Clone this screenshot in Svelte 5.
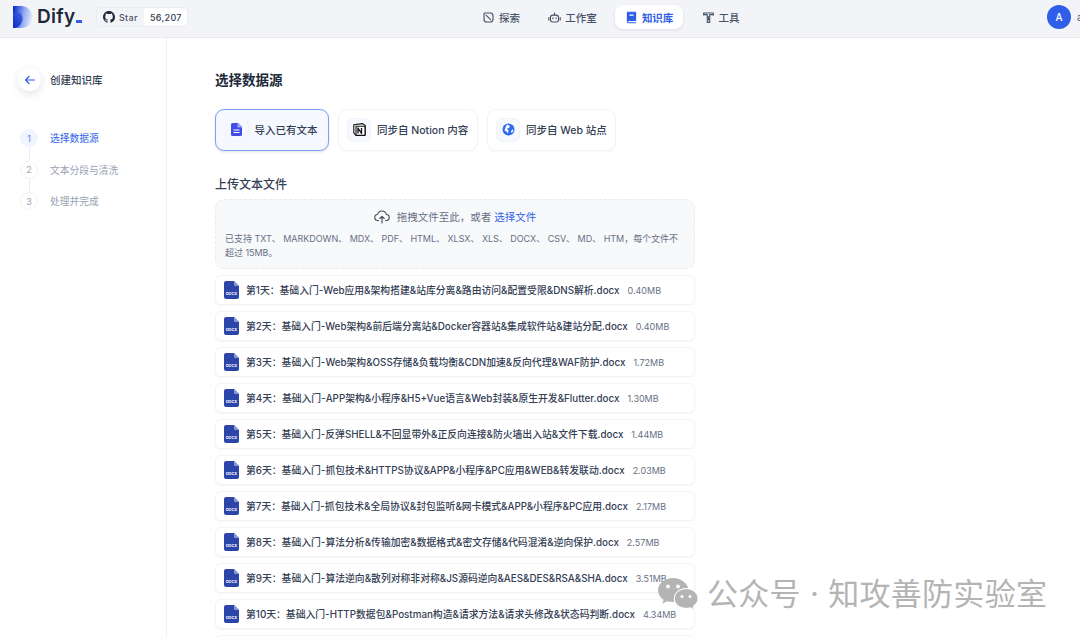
<script>
  const nav = [
    { label: '探索', icon: 'explore' },
    { label: '工作室', icon: 'robot' },
    { label: '知识库', icon: 'book', active: true },
    { label: '工具', icon: 'tool' }
  ];

  const steps = ['选择数据源', '文本分段与清洗', '处理并完成'];

  const files = [
    { name: '第1天：基础入门-Web应用&架构搭建&站库分离&路由访问&配置受限&DNS解析.docx', size: '0.40MB' },
    { name: '第2天：基础入门-Web架构&前后端分离站&Docker容器站&集成软件站&建站分配.docx', size: '0.40MB' },
    { name: '第3天：基础入门-Web架构&OSS存储&负载均衡&CDN加速&反向代理&WAF防护.docx', size: '1.72MB' },
    { name: '第4天：基础入门-APP架构&小程序&H5+Vue语言&Web封装&原生开发&Flutter.docx', size: '1.30MB' },
    { name: '第5天：基础入门-反弹SHELL&不回显带外&正反向连接&防火墙出入站&文件下载.docx', size: '1.44MB' },
    { name: '第6天：基础入门-抓包技术&HTTPS协议&APP&小程序&PC应用&WEB&转发联动.docx', size: '2.03MB' },
    { name: '第7天：基础入门-抓包技术&全局协议&封包监听&网卡模式&APP&小程序&PC应用.docx', size: '2.17MB' },
    { name: '第8天：基础入门-算法分析&传输加密&数据格式&密文存储&代码混淆&逆向保护.docx', size: '2.57MB' },
    { name: '第9天：基础入门-算法逆向&散列对称非对称&JS源码逆向&AES&DES&RSA&SHA.docx', size: '3.51MB' },
    { name: '第10天：基础入门-HTTP数据包&Postman构造&请求方法&请求头修改&状态码判断.docx', size: '4.34MB' }
  ];
</script>

<div class="page">
  <header class="topbar">
    <div class="brand">
      <svg class="logo" width="19" height="22" viewBox="0 0 19 22">
        <defs>
          <linearGradient id="lg" x1="0" y1="0.3" x2="1" y2="0.5">
            <stop offset="0" stop-color="#0b2fd0" />
            <stop offset="0.55" stop-color="#8fa8f2" />
            <stop offset="1" stop-color="#e3e9fb" />
          </linearGradient>
          <linearGradient id="lg2" x1="0" y1="1" x2="1" y2="0">
            <stop offset="0" stop-color="#0a2bc4" />
            <stop offset="1" stop-color="#3f63e6" />
          </linearGradient>
        </defs>
        <path d="M0 0H8C14.500 0 19 4.600 19 11S14.500 22 8 22H0Z" fill="url(#lg)" />
        <path d="M0 7H6C8 7 9.500 9 9.500 12.500S7 22 0 22Z" fill="url(#lg2)" />
      </svg>
      <span class="wordmark">Dify<i></i></span>
      <div class="star">
        <span class="star-left">
          <svg width="12" height="12" viewBox="0 0 16 16" fill="#1f2a37"><path d="M8 0C3.580 0 0 3.580 0 8c0 3.540 2.290 6.530 5.470 7.590.4.070.55-.17.55-.38 0-.19-.01-.82-.01-1.490-2.010.37-2.530-.49-2.690-.94-.09-.23-.48-.94-.82-1.130-.28-.15-.68-.52-.01-.53.63-.01 1.080.58 1.230.82.72 1.210 1.870.87 2.330.66.07-.52.28-.87.51-1.070-1.780-.2-3.640-.89-3.640-3.950 0-.87.31-1.590.82-2.150-.08-.2-.36-1.020.08-2.120 0 0 .67-.21 2.200.82.64-.18 1.320-.27 2-.27s1.360.09 2 .27c1.530-1.040 2.200-.82 2.200-.82.44 1.100.16 1.920.08 2.120.51.56.82 1.270.82 2.150 0 3.070-1.870 3.750-3.650 3.950.29.25.54.73.54 1.480 0 1.070-.01 1.930-.01 2.200 0 .21.15.46.55.38A8.010 8.010 0 0 0 16 8c0-4.420-3.580-8-8-8Z" /></svg>
          Star
        </span>
        <span class="star-count">56,207</span>
      </div>
    </div>

    <nav class="nav">
      {#each nav as item}
        <div class="nav-item" class:active={item.active}>
          <svg width="13" height="13" viewBox="0 0 16 16" fill="none" stroke="currentColor" stroke-width="1.400" stroke-linejoin="round" stroke-linecap="round">
            {#if item.icon === 'explore'}
              <path d="M3 2.500h7.500a3.500 3.500 0 0 1 3 3.500v4a3.500 3.500 0 0 1-3.500 3.500H6A3.500 3.500 0 0 1 2.500 10V3Z" />
              <path d="M5 5l5.500 5.500" />
            {:else if item.icon === 'robot'}
              <rect x="3" y="5" width="10" height="8.500" rx="3" />
              <path d="M8 5V2.500M1 8v3M15 8v3M6 8.500v1M10 8.500v1" />
            {:else if item.icon === 'book'}
              <path d="M3 1.500h10v10H5a2 2 0 0 0-2 1.500Z" fill="currentColor" />
              <path d="M3 13a1.500 1.500 0 0 0 1.500 1.500H13" />
              <path d="M6 5h4" stroke="#fff" />
            {:else}
              <path d="M2 2.500h12v2.500l-1.500-.5h-3V14H6.500V4.500h-3L2 5Z" />
              <path d="M8 7v4" />
            {/if}
          </svg>
          {item.label}
        </div>
      {/each}
    </nav>

    <div class="account">
      <span class="avatar">A</span>
      <span class="account-name">a</span>
    </div>
  </header>

  <div class="body">
    <aside class="sidebar">
      <div class="side-head">
        <span class="back">
          <svg width="12" height="12" viewBox="0 0 12 12" fill="none" stroke="#2f5fe8" stroke-width="1.200" stroke-linecap="round" stroke-linejoin="round"><path d="M10.500 6h-9M5 2.500L1.500 6 5 9.500" /></svg>
        </span>
        <span>创建知识库</span>
      </div>
      <ol class="steps">
        {#each steps as step, i}
          <li class="step" class:current={i === 0}>
            <span class="step-num">{i + 1}</span>
            <span>{step}</span>
          </li>
        {/each}
      </ol>
    </aside>

    <main class="content">
      <h1>选择数据源</h1>

      <div class="sources">
        <div class="source selected">
          <span class="source-icon">
            <svg width="11" height="13" viewBox="0 0 11 13"><path d="M1.500 0H7l4 4v7.500A1.500 1.500 0 0 1 9.500 13h-8A1.500 1.500 0 0 1 0 11.500v-10A1.500 1.500 0 0 1 1.500 0Z" fill="#444ce7" /><path d="M2.500 7h6M2.500 9.500h6" stroke="#fff" stroke-width="1.200" /><path d="M6.500 0v4.500H11" fill="#fff" opacity=".5" /></svg>
          </span>
          导入已有文本
        </div>
        <div class="source notion">
          <span class="source-icon">
            <svg width="13" height="13" viewBox="0 0 13 13" fill="#fff" stroke="#111" stroke-width="1.100" stroke-linejoin="round"><path d="M.8 1.700L9.500.6l2.700 1.900v9.100l-9.300.7L.8 9.900Z" /><path d="M3 3.300h9v9.100H3Z" /><path d="M5 10.500V5l3.500 5.500V5" fill="none" stroke-width="1.300" /></svg>
          </span>
          同步自 Notion 内容
        </div>
        <div class="source web">
          <span class="source-icon">
            <svg width="13" height="13" viewBox="0 0 13 13"><circle cx="6.500" cy="6.500" r="6" fill="#2e6bee" /><path d="M5 1.500l3 1.500-1 2-2 .5 1.500 2-.5 3-1.500-2-2-1 1-3Zm5 5l1.500.5-1.500 3-1-1Z" fill="#fff" /></svg>
          </span>
          同步自 Web 站点
        </div>
      </div>

      <h2>上传文本文件</h2>

      <div class="dropzone">
        <div class="drop-line">
          <svg width="16" height="15" viewBox="0 0 16 15" fill="none" stroke="#3f4957" stroke-width="1.100" stroke-linecap="round" stroke-linejoin="round"><path d="M4.500 11.500H4A3 3 0 0 1 3.600 5.500 4.500 4.500 0 0 1 12.400 5.500 3 3 0 0 1 12 11.500h-.5" /><path d="M8 14V7.500M5.800 9.500L8 7.300l2.200 2.200" /></svg>
          <span>拖拽文件至此，或者 <span class="pick">选择文件</span></span>
        </div>
        <p>已支持 TXT、 MARKDOWN、 MDX、 PDF、 HTML、 XLSX、 XLS、 DOCX、 CSV、 MD、 HTM，每个文件不超过 15MB。</p>
      </div>

      <div class="files">
        {#each files as file}
          <div class="file">
            <svg class="docx" width="15" height="18" viewBox="0 0 15 18">
              <path d="M2 0H10L15 5V16A2 2 0 0 1 13 18H2A2 2 0 0 1 0 16V2A2 2 0 0 1 2 0Z" fill="#2c45a8" />
              <path d="M10 0L15 5H11.500A1.500 1.500 0 0 1 10 3.500Z" fill="#8b9bd8" />
              <text x="7.500" y="14" text-anchor="middle">DOCX</text>
            </svg>
            <span class="file-name">{file.name}</span>
            <span class="file-size">{file.size}</span>
          </div>
        {/each}
        <div class="file"></div>
      </div>
    </main>
  </div>

  <div class="watermark">
    <svg width="42" height="34" viewBox="0 0 42 34" fill="#b4b4b4">
      <path d="M16 1C7.700 1 1 6.500 1 13.200c0 3.900 2.200 7.300 5.700 9.500l-1.400 4.100 4.900-2.500c1.800.5 3.700.8 5.800.8h1.300a10 10 0 0 1-.5-3c0-6.200 5.900-11 13.300-11h1.200C29.500 5.400 23.300 1 16 1Z" />
      <path d="M41 21.500c0-5.500-5.400-9.800-11.800-9.800s-11.900 4.300-11.900 9.800 5.400 9.800 11.900 9.800c1.400 0 2.800-.2 4-.6l3.900 2.200-1.100-3.500c3-1.800 5-4.700 5-7.900Z" stroke="#fff" stroke-width="1" />
      <circle cx="11" cy="9.500" r="1.900" fill="#fff" />
      <circle cx="21" cy="9.500" r="1.900" fill="#fff" />
      <circle cx="25" cy="19.500" r="1.500" fill="#fff" />
      <circle cx="33" cy="19.500" r="1.500" fill="#fff" />
    </svg>
    <span>公众号 · 知攻善防实验室</span>
  </div>
</div>

<style>
  :global(body) {
    margin: 0;
    background: #fff;
    font-family: Inter, "Noto Sans CJK SC", sans-serif;
    color: #1f2a37;
  }

  .page {
    position: relative;
    height: 638px;
    overflow: hidden;
  }

  .topbar {
    height: 38px;
    box-sizing: border-box;
    display: grid;
    grid-template-columns: 459px auto 1fr;
    align-items: center;
    padding: 0 0 3px 13px;
    background: #f3f4f8;
    border-bottom: 1px solid #e9ebf0;
  }

  .brand {
    display: flex;
    align-items: center;
  }

  .logo {
    display: block;
  }

  .wordmark {
    margin-left: 5px;
    width: 46px;
    font-size: 19px;
    font-weight: 600;
    letter-spacing: 0.3px;
    color: #1d2939;
    line-height: 24px;
    white-space: nowrap;
  }

  .wordmark i {
    display: inline-block;
    width: 6px;
    height: 3px;
    margin-left: 1px;
    background: #2f5fe8;
  }

  .star {
    display: flex;
    align-items: stretch;
    height: 20px;
    box-sizing: border-box;
    margin-left: 13px;
    border: 1px solid #eaecf0;
    border-radius: 5px;
    overflow: hidden;
    font-size: 9px;
    font-weight: 500;
    letter-spacing: 0.3px;
    color: #4a5565;
  }

  .star-left {
    display: flex;
    align-items: center;
    gap: 4px;
    width: 47px;
    padding-left: 6px;
    box-sizing: border-box;
  }

  .star-count {
    display: flex;
    align-items: center;
    width: 43px;
    box-sizing: border-box;
    padding-left: 6px;
    background: #fff;
    color: #344054;
  }

  .nav {
    display: flex;
    align-items: center;
    gap: 8.200px;
  }

  .nav-item {
    display: flex;
    align-items: center;
    gap: 4px;
    height: 24px;
    padding: 0 10px;
    border-radius: 8px;
    font-size: 10.500px;
    font-weight: 500;
    color: #475467;
  }

  .nav-item.active {
    background: #fff;
    color: #2f5fe8;
    font-weight: 600;
    box-shadow: 0 1px 3px rgba(16, 24, 40, 0.1);
  }

  .account {
    display: flex;
    align-items: center;
    justify-content: flex-end;
    gap: 6px;
    font-size: 10px;
    color: #475467;
  }

  .avatar {
    width: 24px;
    height: 24px;
    border-radius: 50%;
    display: flex;
    align-items: center;
    justify-content: center;
    background: #2f5fe8;
    color: #fff;
    font-size: 10px;
    font-weight: 500;
  }

  .account-name {
    width: 3px;
    overflow: hidden;
  }

  .body {
    display: flex;
    height: 600px;
  }

  .sidebar {
    width: 167px;
    flex: none;
    box-sizing: border-box;
    border-right: 1px solid #eef0f3;
    padding: 30px 0 0 18px;
  }

  .side-head {
    display: flex;
    align-items: center;
    gap: 9px;
    font-size: 10.500px;
    font-weight: 500;
    color: #344054;
  }

  .back {
    width: 23px;
    height: 23px;
    border-radius: 50%;
    display: flex;
    align-items: center;
    justify-content: center;
    background: #fff;
    box-shadow: 0 3px 8px rgba(16, 24, 40, 0.12);
  }

  .steps {
    list-style: none;
    margin: 38px 0 0 2px;
    padding: 0;
  }

  .step {
    position: relative;
    display: flex;
    align-items: center;
    gap: 12px;
    height: 18px;
    margin-bottom: 13.500px;
    font-size: 9.750px;
    color: #98a2b3;
  }

  .step:not(:last-child)::after {
    content: '';
    position: absolute;
    left: 9px;
    top: 18px;
    height: 13px;
    border-left: 1px solid #eaecf0;
  }

  .step-num {
    width: 16px;
    height: 16px;
    border: 1px solid #f2f4f7;
    border-radius: 50%;
    display: flex;
    align-items: center;
    justify-content: center;
    font-size: 9px;
    color: #98a2b3;
  }

  .step.current {
    color: #2f5fe8;
  }

  .step.current .step-num {
    background: #eff4ff;
    border-color: #eff4ff;
    color: #5b7fe8;
  }

  .content {
    flex: 1;
    padding: 33px 0 0 48px;
  }

  h1 {
    margin: 0;
    font-size: 13.500px;
    line-height: 18px;
    font-weight: 600;
    color: #1d2939;
  }

  .sources {
    display: flex;
    gap: 9px;
    margin-top: 20px;
  }

  .source {
    display: flex;
    align-items: center;
    gap: 6px;
    box-sizing: border-box;
    height: 42px;
    padding: 0 8px 1px;
    border: 1px solid #f2f4f7;
    border-radius: 9px;
    background: #fff;
    font-size: 10.500px;
    font-weight: 500;
    color: #344054;
    white-space: nowrap;
    box-shadow: 0 1px 2px rgba(16, 24, 40, 0.04);
  }

  .source.selected {
    width: 114px;
    padding: 0 8.500px 1px;
    background: #f5f8ff;
    border: 1.500px solid #7e9ff5;
    box-shadow: 0 1px 3px rgba(16, 24, 40, 0.12);
  }

  .source.notion {
    width: 140px;
  }

  .source.web {
    width: 129px;
  }

  .source-icon {
    width: 24px;
    height: 24px;
    flex: none;
    border: 1px solid #f2f4f7;
    border-radius: 6px;
    box-sizing: border-box;
    background: #f5f8ff;
    display: flex;
    align-items: center;
    justify-content: center;
  }

  h2 {
    margin: 25px 0 0;
    font-size: 12px;
    line-height: 18px;
    font-weight: 500;
    color: #344054;
  }

  .dropzone {
    width: 480px;
    height: 70px;
    margin-top: 5px;
    box-sizing: border-box;
    padding: 7px 12px 0 9px;
    background: #f8f9fb;
    border: 1px dashed #e8ebf0;
    border-radius: 9px;
  }

  .drop-line {
    display: flex;
    align-items: center;
    justify-content: center;
    gap: 7px;
    height: 18px;
    margin-right: -3px;
    font-size: 10.500px;
    color: #667085;
  }

  .pick {
    color: #2f5fe8;
  }

  .dropzone p {
    margin: 7px 0 0;
    font-size: 9px;
    line-height: 14px;
    color: #667085;
    letter-spacing: -0.03px;
  }

  .files {
    display: flex;
    flex-direction: column;
    gap: 6px;
    width: 480px;
    margin-top: 6px;
  }

  .file {
    display: flex;
    align-items: center;
    flex: none;
    height: 30px;
    box-sizing: border-box;
    padding-left: 8px;
    background: #fff;
    border: 1px solid #f2f4f7;
    border-radius: 6px;
    box-shadow: 0 1px 2px rgba(16, 24, 40, 0.04);
  }

  .docx {
    flex: none;
  }

  .docx text {
    font-size: 3.800px;
    font-weight: 700;
    fill: #fff;
  }

  .file-name {
    margin-left: 7px;
    font-size: 9.820px;
    font-weight: 500;
    color: #344054;
    white-space: nowrap;
  }

  .file-size {
    margin-left: 8px;
    font-size: 9px;
    color: #667085;
    white-space: nowrap;
  }

  .watermark {
    position: absolute;
    left: 657px;
    top: 574px;
    display: flex;
    align-items: center;
    gap: 8px;
    font-size: 31px;
    line-height: 40px;
    font-weight: 400;
    color: #b4b4b4;
    letter-spacing: 0.3px;
    white-space: nowrap;
  }
</style>
